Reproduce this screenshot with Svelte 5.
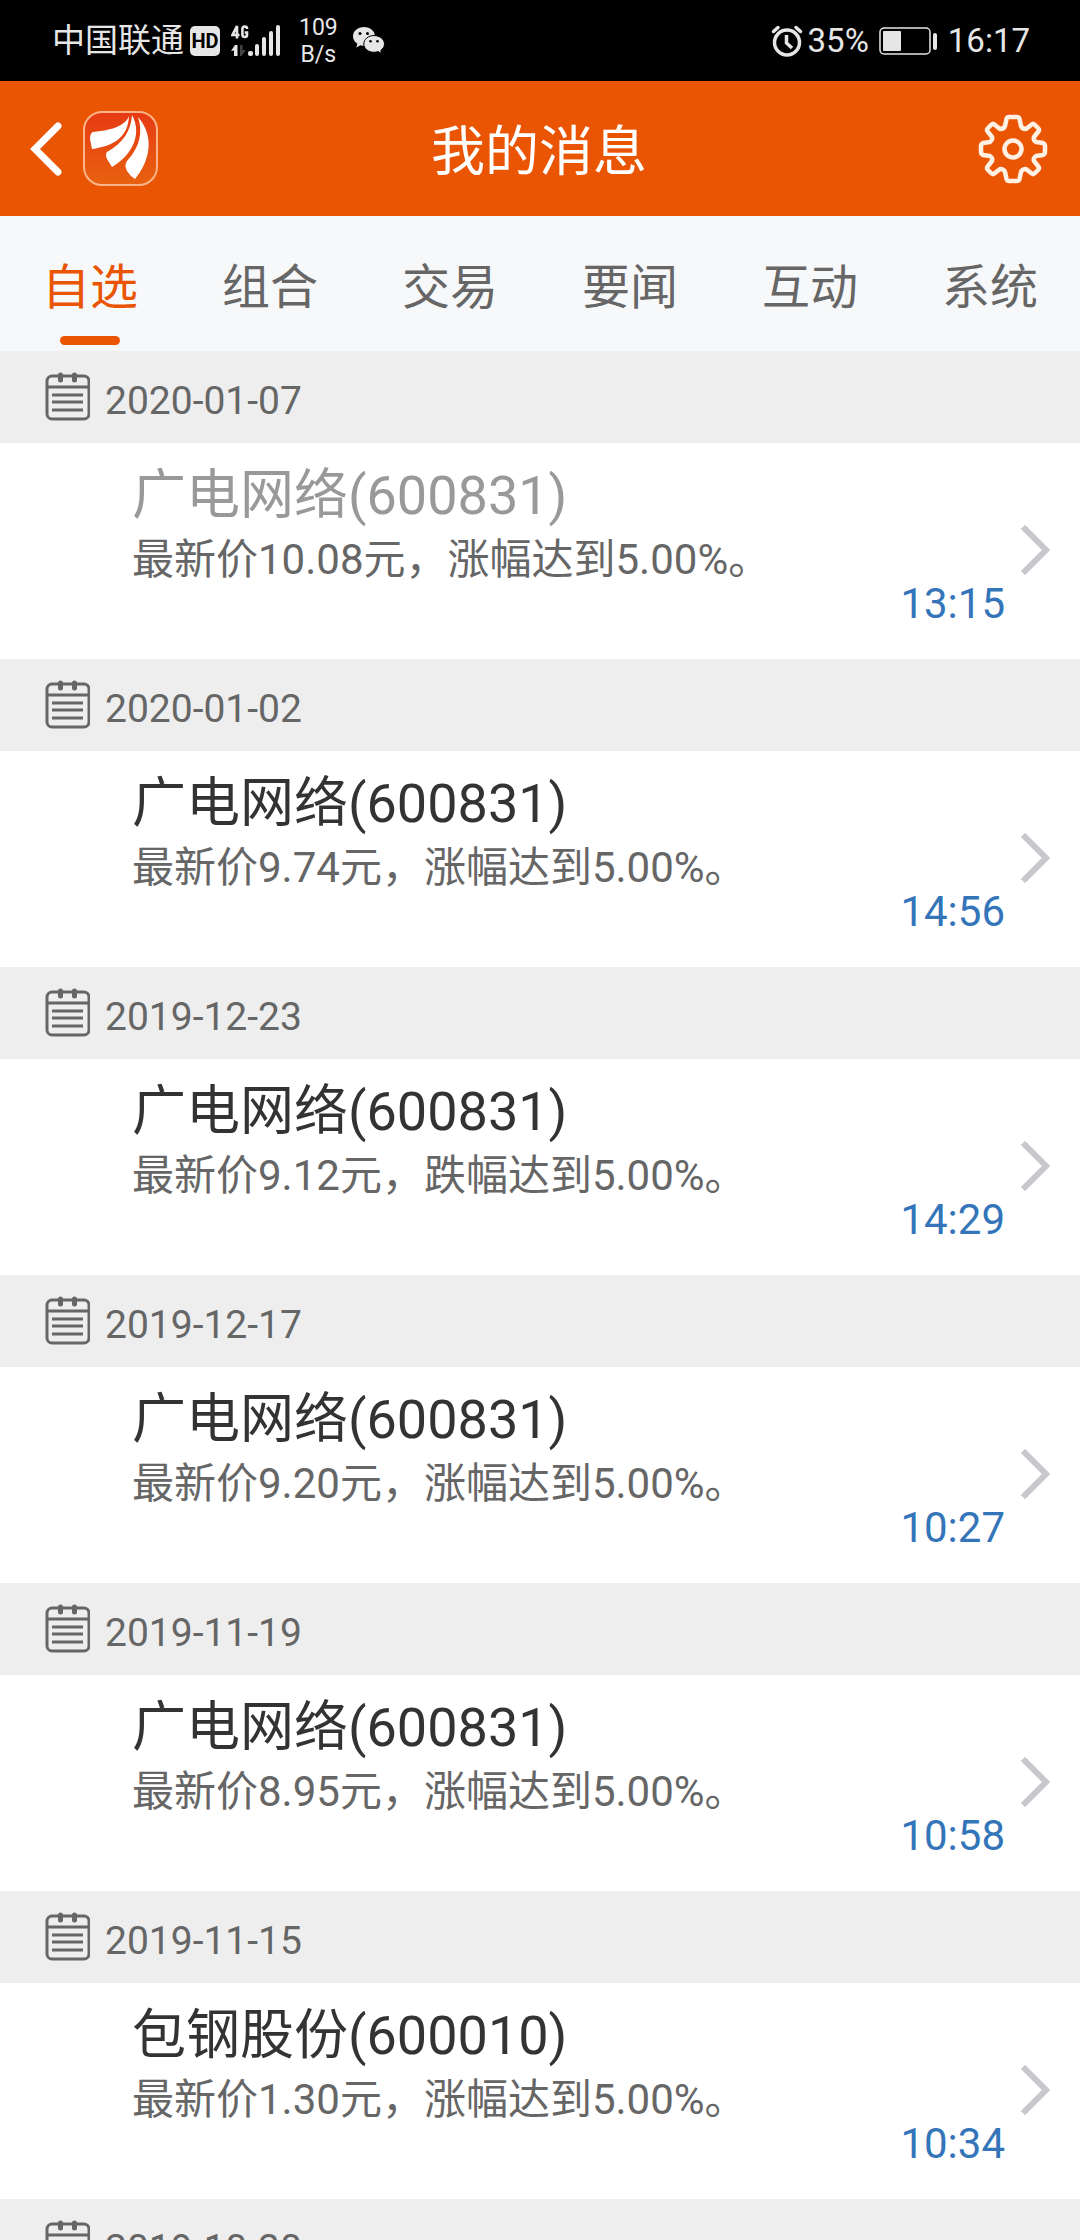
<script>
  const tabs = ['自选', '组合', '交易', '要闻', '互动', '系统'];
  let activeTab = $state('自选');

  const messages = [
    { date: '2020-01-07', title: '广电网络(600831)', text: '最新价10.08元，涨幅达到5.00%。', time: '13:15', read: true },
    { date: '2020-01-02', title: '广电网络(600831)', text: '最新价9.74元，涨幅达到5.00%。', time: '14:56' },
    { date: '2019-12-23', title: '广电网络(600831)', text: '最新价9.12元，跌幅达到5.00%。', time: '14:29' },
    { date: '2019-12-17', title: '广电网络(600831)', text: '最新价9.20元，涨幅达到5.00%。', time: '10:27' },
    { date: '2019-11-19', title: '广电网络(600831)', text: '最新价8.95元，涨幅达到5.00%。', time: '10:58' },
    { date: '2019-11-15', title: '包钢股份(600010)', text: '最新价1.30元，涨幅达到5.00%。', time: '10:34' },
    { date: '2019-10-30' }
  ];
</script>

<div class="app">
  <div class="status-bar">
    <div class="status-left">
      <span>中国联通</span>
      <span class="hd">HD</span>
      <svg class="signal" width="52" height="34" viewBox="0 0 52 34" fill="#e6e6e6" aria-hidden="true">
        <g fill="none" stroke="#e6e6e6" stroke-width="2.600">
          <path d="M6 14.500V2L1.500 11H8.500" />
          <path d="M16 5V4.500Q16 2.500 13.700 2.500Q11.400 2.500 11.400 5V10.500Q11.400 13 13.700 13Q16 13 16 11V8.500H13.700" />
        </g>
        <path d="M0 27L4 21H6.500V32H3V26.500Z" />
        <path d="M9 21H11.500V26L15 26L10.500 32H9Z" fill="#444" />
        <rect x="17" y="27" width="5" height="5" rx="2" />
        <rect x="24" y="20" width="4" height="12" rx="2" />
        <rect x="31" y="13" width="4" height="19" rx="2" />
        <rect x="38" y="7" width="4" height="25" rx="2" />
        <rect x="45" y="1" width="4" height="31" rx="2" />
      </svg>
      <span class="speed">109<br>B/s</span>
      <svg class="wechat" width="32" height="27" viewBox="0 0 32 27" aria-hidden="true">
        <path fill="#e6e6e6" d="M11 0C4.900 0 0 4 0 9.300C0 12.500 1.700 15 4.400 16.700L3.200 20.400L7.400 18.200Q9.200 18.700 11.300 18.700C17.400 18.700 22 14.500 22 9.300C22 4 17 0 11 0Z" />
        <path fill="#e6e6e6" stroke="#000" d="M21 8.500C26.700 8.500 31.500 12.300 31.500 17C31.500 19.600 30 21.800 27.800 23.400L28.700 26.500L25 24.600Q23 25.300 21 25.300C15.300 25.300 10.800 21.600 10.800 17C10.800 12.300 15.300 8.500 21 8.500Z" />
        <g fill="#000">
          <circle cx="7" cy="6.500" r="1.500" /><circle cx="14.500" cy="6.500" r="1.500" />
          <circle cx="17.500" cy="14.300" r="1.300" /><circle cx="24.500" cy="14.300" r="1.300" />
        </g>
      </svg>
    </div>
    <div class="status-right">
      <svg width="32" height="32" viewBox="0 0 32 32" fill="none" stroke="#e6e6e6" stroke-linecap="round" aria-hidden="true">
        <circle cx="16" cy="17.500" r="12.500" stroke-width="3.500" />
        <path d="M2.500 6.500L7 2.500M29.500 6.500L25 2.500" stroke-width="3.500" />
        <path d="M15.500 10V18L21 23" stroke-width="3.500" stroke-linecap="butt" />
      </svg>
      <span class="percent">35%</span>
      <svg class="battery" width="59" height="28" viewBox="0 0 59 28" aria-hidden="true">
        <rect x="1" y="1" width="50" height="26" rx="4" fill="none" stroke="#e6e6e6" stroke-width="1.500" />
        <rect x="4" y="4" width="18" height="20" rx="1" fill="#e6e6e6" />
        <rect x="54" y="6" width="4" height="17" rx="2" fill="#e6e6e6" />
      </svg>
      <span>16:17</span>
    </div>
  </div>

  <header>
    <div class="header-side">
      <button aria-label="返回">
        <svg width="32" height="54" viewBox="0 0 32 54" fill="none" stroke="#fff" stroke-width="7" stroke-linecap="round">
          <path d="M28 4L5 27L28 50" />
        </svg>
      </button>
      <svg width="75" height="75" viewBox="0 0 75 75" aria-hidden="true">
        <defs>
          <linearGradient id="logo-fill" x1="0" y1="0" x2="0" y2="1">
            <stop offset="0" stop-color="#e63a14" />
            <stop offset="1" stop-color="#e8620f" />
          </linearGradient>
        </defs>
        <rect x="1" y="1" width="73" height="73" rx="18" fill="url(#logo-fill)" stroke="#fbb48a" stroke-width="2" />
        <g fill="#fff">
          <path d="M46 5C43 13 33 19 10 21Q7 22 7 28L9 38C30 35 45 27 46 5Z" />
          <path d="M49 4C48 20 40 32 24 41Q22 43 24 48L29 56C45 47 61 26 49 4Z" />
          <path d="M55 6C60 21 57 36 44 50Q41 54 44 60Q47 65 52 68C67 50 72 25 55 6Z" />
        </g>
      </svg>
    </div>
    <h1>我的消息</h1>
    <div class="header-side end">
      <button aria-label="设置">
        <svg width="70" height="70" viewBox="-35 -35 70 70" fill="none" stroke="#fff0e4" stroke-width="4.500" stroke-linejoin="round">
          <path d="M-4 -32H4Q6 -32 6.500 -30L8 -23Q9 -20 13 -20L18 -24Q20 -26 22 -24L25 -21Q27 -19 25 -17L21 -12Q20 -9 23 -7L30 -6Q32 -5 32 -3V3Q32 5 30 6L23 7Q20 9 21 12L25 17Q27 19 25 21L22 24Q20 26 18 24L13 20Q9 20 8 23L6.500 30Q6 32 4 32H-4Q-6 32 -6.500 30L-8 23Q-9 20 -13 20L-18 24Q-20 26 -22 24L-25 21Q-27 19 -25 17L-21 12Q-20 9 -23 7L-30 6Q-32 5 -32 3V-3Q-32 -5 -30 -6L-23 -7Q-20 -9 -21 -12L-25 -17Q-27 -19 -25 -21L-22 -24Q-20 -26 -18 -24L-13 -20Q-9 -20 -8 -23L-6.500 -30Q-6 -32 -4 -32Z" />
          <circle r="8.500" />
        </svg>
      </button>
    </div>
  </header>

  <nav>
    {#each tabs as tab}
      <button class="tab" class:active={tab === activeTab} onclick={() => (activeTab = tab)}>{tab}</button>
    {/each}
  </nav>

  <main>
    {#each messages as msg}
      <section>
        <h2>
          <svg width="45" height="50" viewBox="0 0 45 50" fill="none" stroke="#666" aria-hidden="true">
            <rect x="2" y="5" width="42" height="43" rx="5" stroke-width="3" />
            <path d="M1 16H44M7 24H38M7 31H38M7 39H38" stroke-width="3" />
            <path d="M15.500 4V9M29.500 4V9" stroke-width="5" stroke-linecap="round" />
          </svg>
          {msg.date}
        </h2>
        {#if msg.title}
          <a class="message" class:read={msg.read} href="#{msg.date}">
            <div class="message-body">
              <h3>{msg.title}</h3>
              <p>{msg.text}</p>
            </div>
            <time>{msg.time}</time>
            <svg class="chevron" width="30" height="50" viewBox="0 0 30 50" fill="none" stroke="#c7c7cc" stroke-width="6" aria-hidden="true">
              <path d="M3 2L26 25L3 48" />
            </svg>
          </a>
        {/if}
      </section>
    {/each}
  </main>
</div>

<style>
  :global(body) {
    margin: 0;
  }

  .app {
    display: flex;
    flex-direction: column;
    height: 100vh;
    overflow: hidden;
    background: #eee;
    font-family: Roboto, 'Noto Sans CJK SC', sans-serif;
  }

  h1, h2, h3, p {
    margin: 0;
    font-weight: 400;
  }

  button {
    border: none;
    background: none;
    padding: 0;
    font-family: inherit;
    cursor: pointer;
  }

  svg {
    display: block;
    flex: none;
  }

  .status-bar {
    display: flex;
    justify-content: space-between;
    flex: none;
    height: 81px;
    padding: 0 50px 0 52px;
    background: #000;
    color: #e6e6e6;
    font-size: 33px;
    line-height: 40px;
  }

  .status-left,
  .status-right {
    display: flex;
    align-items: center;
  }

  .hd {
    margin-left: 6px;
    width: 30px;
    border-radius: 5px;
    background: #e6e6e6;
    color: #000;
    font-size: 20px;
    font-weight: 700;
    line-height: 30px;
    text-align: center;
  }

  .signal {
    margin-left: 11px;
  }

  .speed {
    margin-left: 16px;
    font-size: 23px;
    line-height: 27px;
    text-align: center;
  }

  .wechat {
    margin-left: 15px;
  }

  .battery {
    margin: 0 10px;
  }

  .percent {
    margin-left: 5px;
  }

  header {
    display: flex;
    align-items: center;
    flex: none;
    height: 135px;
    padding: 0 32px 0 30px;
    background: #ea5504;
  }

  .header-side {
    display: flex;
    align-items: center;
    flex: 1;
    gap: 21px;
  }

  .header-side.end {
    justify-content: flex-end;
  }

  h1 {
    padding-top: 8px;
    color: #fff;
    font-size: 54px;
    line-height: 64px;
  }

  nav {
    display: flex;
    flex: none;
    height: 135px;
    background: #f7f8fa;
  }

  .tab {
    position: relative;
    flex: 1;
    padding-top: 8px;
    color: #666;
    font-size: 48px;
    line-height: 64px;
  }

  .tab.active {
    color: #ea5504;
  }

  .tab.active::after {
    content: '';
    position: absolute;
    left: 50%;
    bottom: 6px;
    width: 60px;
    height: 9px;
    margin-left: -30px;
    border-radius: 5px;
    background: #ea5504;
  }

  main {
    flex: 1;
    min-height: 0;
    overflow-y: auto;
    scrollbar-width: none;
  }

  h2 {
    display: flex;
    gap: 15px;
    padding: 20px 45px 12px;
    background: #eee;
    color: #666;
    font-size: 39px;
    line-height: 60px;
  }

  .message {
    display: flex;
    align-items: flex-end;
    padding: 21px 30px 31px 132px;
    min-height: 164px;
    background: #fff;
    text-decoration: none;
  }

  .message-body {
    flex: 1;
    align-self: flex-start;
    line-height: 64px;
  }

  h3 {
    color: #333;
    font-size: 54px;
  }

  .read h3 {
    color: #999;
  }

  p {
    color: #666;
    font-size: 42px;
  }

  time {
    color: #3475b9;
    font-size: 42px;
    line-height: 48px;
  }

  .chevron {
    align-self: center;
    margin: 8px 0 0 15px;
  }
</style>
